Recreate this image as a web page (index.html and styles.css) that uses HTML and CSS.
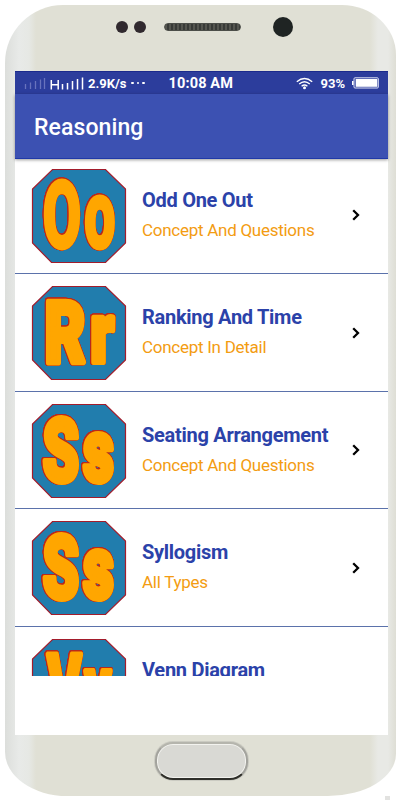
FILE: index.html
```html
<!DOCTYPE html>
<html lang="en">
<head>
  <meta charset="UTF-8" />
  <meta name="viewport" content="width=device-width, initial-scale=1" />
  <title>Reasoning</title>
  <link rel="stylesheet" href="styles.css">
</head>
<body>

<div class="phone">
  <div class="phone-top">
    <span class="sensor"></span>
    <span class="sensor"></span>
    <span class="speaker"></span>
    <span class="camera"></span>
  </div>

  <div class="screen">
    <div class="status-bar">
      <svg class="signal" width="60" height="14" viewBox="0 0 60 14">
        <path d="M1.500 8v5M6.500 6.500v6.500M11.500 5v8M16.500 3.500v9.500M20.500 2v11" stroke="#6873bd" stroke-width="1.300" />
        <path d="M27.300 4v9.500M34.200 4v9.500M27 8.700h7" stroke="#fff" stroke-width="1.500" fill="none" />
        <path d="M38.500 8v5.500M43.500 7v6.500M48.500 5v8.500M53.500 3v10.500M58.500 1.500v12" stroke="#fff" stroke-width="1.500" />
      </svg>
      <span class="speed">2.9K/s</span>
      <span class="dots"><i></i><i></i><i></i></span>
      <span class="time">10:08 AM</span>
      <svg class="wifi" width="17" height="13" viewBox="0 0 17 13">
        <path d="M.8 4.800Q8.500-1.800 16.200 4.800M3.200 7.100Q8.500 2.400 13.800 7.100M5.600 9.300Q8.500 6.700 11.400 9.300" fill="none" stroke="#fff" stroke-width="1.300" />
        <circle cx="8.500" cy="10.800" r="1.500" fill="#fff" />
      </svg>
      <span class="percent">93%</span>
      <svg class="battery" width="28" height="12" viewBox="0 0 28 12">
        <path d="M1.800 4v4" stroke="#fff" stroke-width="1.600" />
        <rect x="3" y=".8" width="24.300" height="10.200" rx="1" fill="none" stroke="#dfe3f6" />
        <rect x="4.700" y="2" width="21.600" height="7.800" fill="#fff" />
      </svg>
    </div>

    <header>
      <h1>Reasoning</h1>
    </header>

    <main>
      <div class="row">
        <svg class="badge" viewBox="0 0 94 94">
          <path class="tile" d="M20.500.5h53L93.500 20v54L73.500 93.500h-54L.5 74V20z" />
          <g class="letters round">
            <text transform="translate(10.700 78.500) scale(.557 .94)">O</text>
            <text transform="translate(52.200 78.500) scale(.556 .965)">o</text>
          </g>
        </svg>
        <div class="info">
          <h2>Odd One Out</h2>
          <p>Concept And Questions</p>
        </div>
        <svg class="arrow" viewBox="0 0 8 12"><path d="M1.200 1.200 6 6 1.200 10.800" /></svg>
      </div>

      <div class="row">
        <svg class="badge" viewBox="0 0 94 94">
          <path class="tile" d="M20.500.5h53L93.500 20v54L73.500 93.500h-54L.5 74V20z" />
          <g class="letters">
            <text transform="translate(12.700 76) scale(.625 .85)">R</text>
            <text transform="translate(58.500 76) scale(.62 .84)">r</text>
          </g>
        </svg>
        <div class="info">
          <h2>Ranking And Time</h2>
          <p>Concept In Detail</p>
        </div>
        <svg class="arrow" viewBox="0 0 8 12"><path d="M1.200 1.200 6 6 1.200 10.800" /></svg>
      </div>

      <div class="row">
        <svg class="badge" viewBox="0 0 94 94">
          <path class="tile" d="M20.500.5h53L93.500 20v54L73.500 93.500h-54L.5 74V20z" />
          <g class="letters">
            <text transform="translate(10.700 77) scale(.58 .87)">S</text>
            <text transform="translate(51.300 77) scale(.595 .88)">s</text>
          </g>
        </svg>
        <div class="info">
          <h2>Seating Arrangement</h2>
          <p>Concept And Questions</p>
        </div>
        <svg class="arrow" viewBox="0 0 8 12"><path d="M1.200 1.200 6 6 1.200 10.800" /></svg>
      </div>

      <div class="row">
        <svg class="badge" viewBox="0 0 94 94">
          <path class="tile" d="M20.500.5h53L93.500 20v54L73.500 93.500h-54L.5 74V20z" />
          <g class="letters">
            <text transform="translate(10.700 77) scale(.58 .87)">S</text>
            <text transform="translate(51.300 77) scale(.595 .88)">s</text>
          </g>
        </svg>
        <div class="info">
          <h2>Syllogism</h2>
          <p>All Types</p>
        </div>
        <svg class="arrow" viewBox="0 0 8 12"><path d="M1.200 1.200 6 6 1.200 10.800" /></svg>
      </div>

      <div class="row">
        <svg class="badge" viewBox="0 0 94 94">
          <path class="tile" d="M20.500.5h53L93.500 20v54L73.500 93.500h-54L.5 74V20z" />
          <g class="letters">
            <text transform="translate(15.500 75) scale(.51 .84)">V</text>
            <text transform="translate(52.700 76) scale(.51 .84)">v</text>
          </g>
        </svg>
        <div class="info">
          <h2>Venn Diagram</h2>
        </div>
      </div>
    </main>
  </div>

  <div class="phone-bottom">
    <span class="home-button"></span>
  </div>
</div>
<span class="corner-mark"></span>

</body>
</html>
```

FILE: styles.css
```css
* {
  box-sizing: border-box;
}

body {
  margin: 0;
  height: 800px;
  overflow: hidden;
  background-color: #fff;
  font-family: Roboto, "Liberation Sans", sans-serif;
}

h1, h2, p {
  margin: 0;
}

/* phone body */
.phone {
  width: 391px;
  height: 791px;
  margin: 5px 0 0 5px;
  padding: 0 8px 0 10px;
  border-radius: 58px 54px 68px 62px / 58px 50px 42px 44px;
  background: linear-gradient(to right, #dcdedb 0, #e8eae8 14px, #e6e8e4 24px, #e0e0d5 31px, #e0e0d5 365px, #e8e9e5 373px, #e8e9e5 383px, #deded5 391px);
}

.phone-top {
  display: flex;
  align-items: center;
  height: 66px;
  padding: 0 0 23px 100px;
}

.sensor {
  width: 12px;
  height: 12px;
  margin-left: 1px;
  margin-right: 5px;
  border-radius: 50%;
  background-color: #30292e;
}

.speaker {
  width: 77px;
  height: 8px;
  margin-left: 13px;
  border: 1px solid #4c4e49;
  border-radius: 4px;
  background: repeating-linear-gradient(to right, #555650 0, #555650 2px, #383a37 2px, #383a37 4px);
}

.camera {
  width: 20px;
  height: 20px;
  margin-left: 32px;
  border-radius: 50%;
  background-color: #1f2423;
}

.screen {
  height: 664px;
  background-color: #fff;
}

/* status bar */
.status-bar {
  display: flex;
  align-items: center;
  height: 23px;
  padding: 0 9px 0 9px;
  border-top: 1px solid #1b2a8c;
  background-color: #2c3d9c;
  color: #fff;
  font-size: 13px;
  font-weight: 700;
}

.speed {
  width: 40px;
  margin-left: 4px;
  white-space: nowrap;
}

.dots {
  display: flex;
  gap: 3px;
  margin-left: 3px;
}

.dots i {
  width: 2.5px;
  height: 2.5px;
  border-radius: 50%;
  background-color: #fff;
}

.time {
  margin-left: 24px;
  font-size: 14.5px;
  letter-spacing: 0.15px;
  white-space: nowrap;
}

.wifi {
  margin-left: auto;
}

.percent {
  margin: 0 6px 0 7px;
}

/* app bar */
header {
  position: relative;
  display: flex;
  align-items: center;
  height: 65px;
  padding: 2px 0 0 19px;
  border-bottom: 1px solid #2039a8;
  background-color: #3c51b2;
  box-shadow: 0 1px 3px rgba(0, 0, 0, 0.4);
}

h1 {
  color: #fff;
  font-size: 23px;
  font-weight: 500;
  letter-spacing: 0.1px;
}

/* topic list */
main {
  height: 517px;
  overflow: hidden;
}

.row {
  display: flex;
  height: 117.5px;
  padding: 12px 28px 0 17px;
  border-bottom: 1px solid #5b72ab;
}

.row:first-child {
  height: 115px;
  padding-top: 9.5px;
}

.badge {
  width: 94px;
  height: 94px;
  overflow: visible;
}

.tile {
  fill: #217dad;
  stroke: #a31c2b;
  stroke-width: 1.2px;
}

/* heavy letters with a thin red edge */
.letters {
  font-size: 100px;
  font-weight: 900;
  fill: #ffa600;
  stroke: #ffa600;
  stroke-width: 7px;
  stroke-linejoin: round;
  filter: drop-shadow(0.9px 0 0 #b8291c) drop-shadow(-0.9px 0 0 #b8291c) drop-shadow(0 0.9px 0 #b8291c) drop-shadow(0 -0.9px 0 #b8291c);
}

.letters.round {
  stroke-width: 3px;
}

.info {
  flex: 1;
  padding: 19px 0 0 16px;
  white-space: nowrap;
}

h2 {
  color: #2b42a9;
  font-size: 20px;
  font-weight: 700;
  line-height: 24px;
  letter-spacing: -0.28px;
}

.info p {
  margin-top: 8px;
  color: #f39c12;
  font-size: 17px;
  line-height: 20px;
  letter-spacing: -0.27px;
}

.arrow {
  width: 8px;
  height: 12px;
  margin-top: 40.5px;
}

.arrow path {
  fill: none;
  stroke: #000;
  stroke-width: 2.3px;
}

/* home button */
.phone-bottom {
  display: flex;
  justify-content: center;
  padding: 7px 0 0 0;
}

.home-button {
  width: 93px;
  height: 38px;
  margin-left: -1px;
  border: 2px solid #a3a39d;
  border-top-color: #b5b5ad;
  border-bottom-color: #2f2f2a;
  border-radius: 18px;
  background-color: #d9d9d4;
  box-shadow: 0 0 0 1px #cbcbc2, inset 0 0 0 1px #f3f3ef;
}

.corner-mark {
  position: absolute;
  left: 385px;
  top: 796px;
  width: 5px;
  height: 4px;
  background-color: #e2e2e0;
}
```
